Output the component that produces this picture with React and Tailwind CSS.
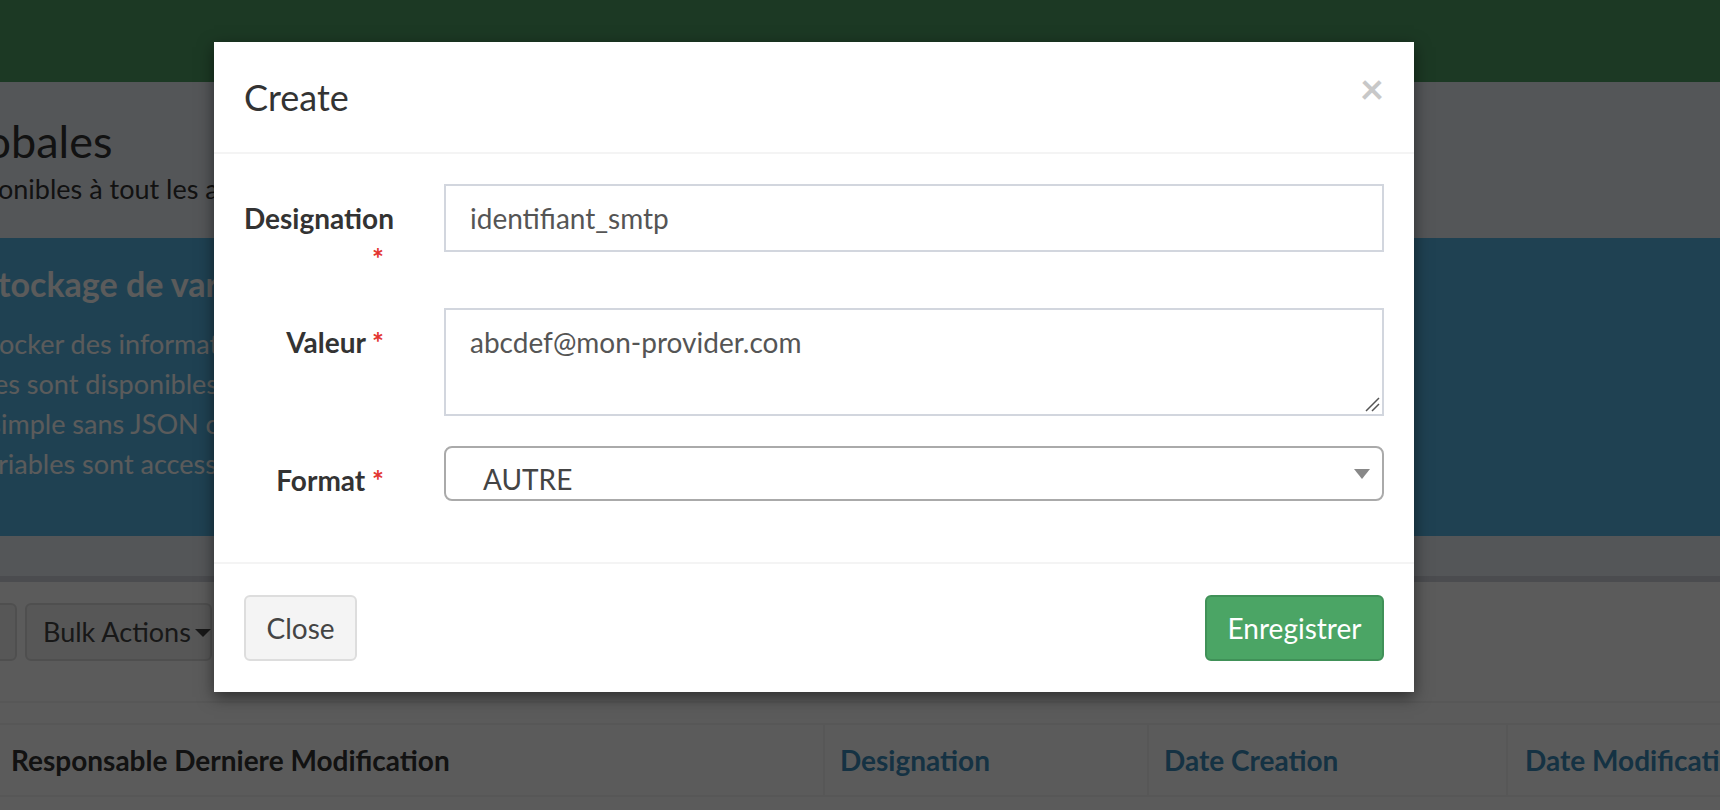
import React from "react";

function Cut({ pre, post, edge, className }) {
  return (
    <div className={`flex whitespace-nowrap ${className}`}>
      <span className={`flex shrink-0 justify-end ${edge}`}>
        <span className="shrink-0">{pre}</span>
      </span>
      <span className="shrink-0">{post}</span>
    </div>
  );
}

function Label({ children }) {
  return (
    <div className="w-[170px] shrink-0 pl-[30px]">
      <div className="w-[140px] pt-[14px] text-right text-[28px] leading-[40px] font-bold text-[#333]">
        {children}
      </div>
    </div>
  );
}

const Star = () => <span className="text-[#e3342f]">*</span>;

export default function App() {
  return (
    <div className="relative w-[1720px] h-[810px] overflow-hidden bg-[#ecf0f5] [font-family:Lato,'Noto_Sans',sans-serif] text-[#333]">
      {/* top navbar */}
      <div className="h-[82px] bg-[#4fa165]" />

      {/* content header */}
      <div className="h-[156px] pt-[34px]">
        <Cut
          pre="Variables Glo"
          post="bales"
          edge="w-[11px]"
          className="text-[45px] leading-[50px] text-[#333]"
        />
        <Cut
          pre="Variables disp"
          post="onibles à tout les automates de la plateforme"
          edge="w-0 ml-[-2px]"
          className="mt-[6px] text-[27px] leading-[34px] text-[#333]"
        />
      </div>

      {/* callout */}
      <div className="h-[298px] bg-[#57b7e6] pt-[26px] text-white">
        <Cut
          pre="S"
          post="tockage de variables globales"
          edge="w-0 ml-[-2px]"
          className="text-[34px] leading-[40px] font-bold"
        />
        <div className="mt-[20px] text-[27px] leading-[40px]">
          <Cut pre="Cet écran permet de st" post="ocker des informations réutilisables." edge="w-0 ml-[-1px]" />
          <Cut pre="Les variabl" post="es sont disponibles dans tous les automates." edge="w-0 ml-[-6px]" />
          <Cut pre="Le stockage est s" post="imple sans JSON ou autre format structuré." edge="w-0 ml-[1px]" />
          <Cut pre="Ces va" post="riables sont accessibles depuis les scripts." edge="w-0 ml-[-2px]" />
        </div>
      </div>

      <div className="h-[40px]" />

      {/* box */}
      <div className="border-t-[6px] border-[#d2d6de] bg-white h-[240px]">
        <div className="flex gap-[8px] pt-[21px]">
          <div className="ml-[-43px] w-[60px] h-[58px] rounded-[6px] border-2 border-[#dddddd] bg-[#f4f4f4]" />
          <div className="flex w-[187px] h-[58px] items-center gap-[3px] whitespace-nowrap rounded-[6px] border-2 border-[#dddddd] bg-[#f4f4f4] pl-[16px] text-[27px] text-[#444]">
            <span>Bulk Actions</span>
            <svg width="18" height="10" viewBox="0 0 18 10" className="mt-[2px] shrink-0">
              <path d="M1 1 L17 1 L9 9 Z" fill="#444" />
            </svg>
          </div>
        </div>
        <div className="mt-[40px] h-[22px] border-t-2 border-[#f4f4f4]" />
        <div className="flex h-[74px] border-y-2 border-[#f4f4f4] text-[28px] leading-[40px] font-bold">
          <div className="flex w-[823px] shrink-0 items-center pl-[11px] text-[#333]">
            Responsable Derniere Modification
          </div>
          <div className="flex w-[324px] shrink-0 items-center border-l-2 border-[#f4f4f4] pl-[15px] text-[#3c8dbc]">
            Designation
          </div>
          <div className="flex w-[359px] shrink-0 items-center border-l-2 border-[#f4f4f4] pl-[15px] text-[#3c8dbc]">
            Date Creation
          </div>
          <div className="flex flex-1 items-center whitespace-nowrap border-l-2 border-[#f4f4f4] pl-[17px] text-[#3c8dbc]">
            Date Modification
          </div>
        </div>
      </div>

      {/* backdrop */}
      <div className="absolute inset-0 bg-[rgba(0,0,0,0.645)]" />

      {/* modal */}
      <div className="absolute left-[214px] top-[42px] w-[1200px] bg-white shadow-[0_5px_15px_rgba(0,0,0,0.5)]">
        <div className="flex items-start justify-between border-b-2 border-[#f4f4f4] px-[30px] py-[30px]">
          <div className="text-[36px] leading-[50px] text-[#333]">Create</div>
          <span className="mt-[-5px] text-[42px] leading-none font-bold text-[#c8c8c8]">×</span>
        </div>

        <div className="pt-[30px] pb-[31px]">
          <div className="mb-[30px] flex">
            <Label>
              Designation <Star />
            </Label>
            <div className="ml-[60px] mr-[30px] flex-1">
              <div className="flex h-[68px] items-center border-2 border-[#d2d6de] px-[24px] text-[28px] leading-[40px] text-[#555]">
                identifiant_smtp
              </div>
            </div>
          </div>

          <div className="mb-[30px] flex">
            <Label>
              Valeur <Star />
            </Label>
            <div className="ml-[60px] mr-[30px] flex-1">
              <div className="relative h-[108px] border-2 border-[#d2d6de] px-[24px] py-[12px] text-[28px] leading-[40px] text-[#555]">
                abcdef@mon-provider.com
                <svg width="16" height="16" viewBox="0 0 16 16" className="absolute right-[2px] bottom-[2px]">
                  <path d="M15 2 L2 15 M15 8 L8 15" stroke="#555" strokeWidth="1.5" />
                </svg>
              </div>
            </div>
          </div>

          <div className="mb-[30px] flex">
            <Label>
              Format <Star />
            </Label>
            <div className="ml-[60px] mr-[30px] flex-1">
              <div className="relative h-[55px] rounded-[8px] border-2 border-[#aaaaaa] pl-[37px] pt-[11px] text-[28px] leading-[40px] text-[#444]">
                AUTRE
                <svg width="16" height="10" viewBox="0 0 16 10" className="absolute right-[12px] top-[21px]">
                  <path d="M0 0 L16 0 L8 10 Z" fill="#888" />
                </svg>
              </div>
            </div>
          </div>
        </div>

        <div className="flex items-center justify-between border-t-2 border-[#f4f4f4] px-[30px] pt-[31px] pb-[31px]">
          <button className="flex h-[66px] w-[113px] items-center justify-center rounded-[6px] border-2 border-[#dddddd] bg-[#f4f4f4] text-[28px] text-[#444]">
            Close
          </button>
          <button className="flex h-[66px] w-[179px] items-center justify-center rounded-[6px] border-2 border-[#409158] bg-[#4ba565] text-[28px] text-white">
            Enregistrer
          </button>
        </div>
      </div>
    </div>
  );
}
